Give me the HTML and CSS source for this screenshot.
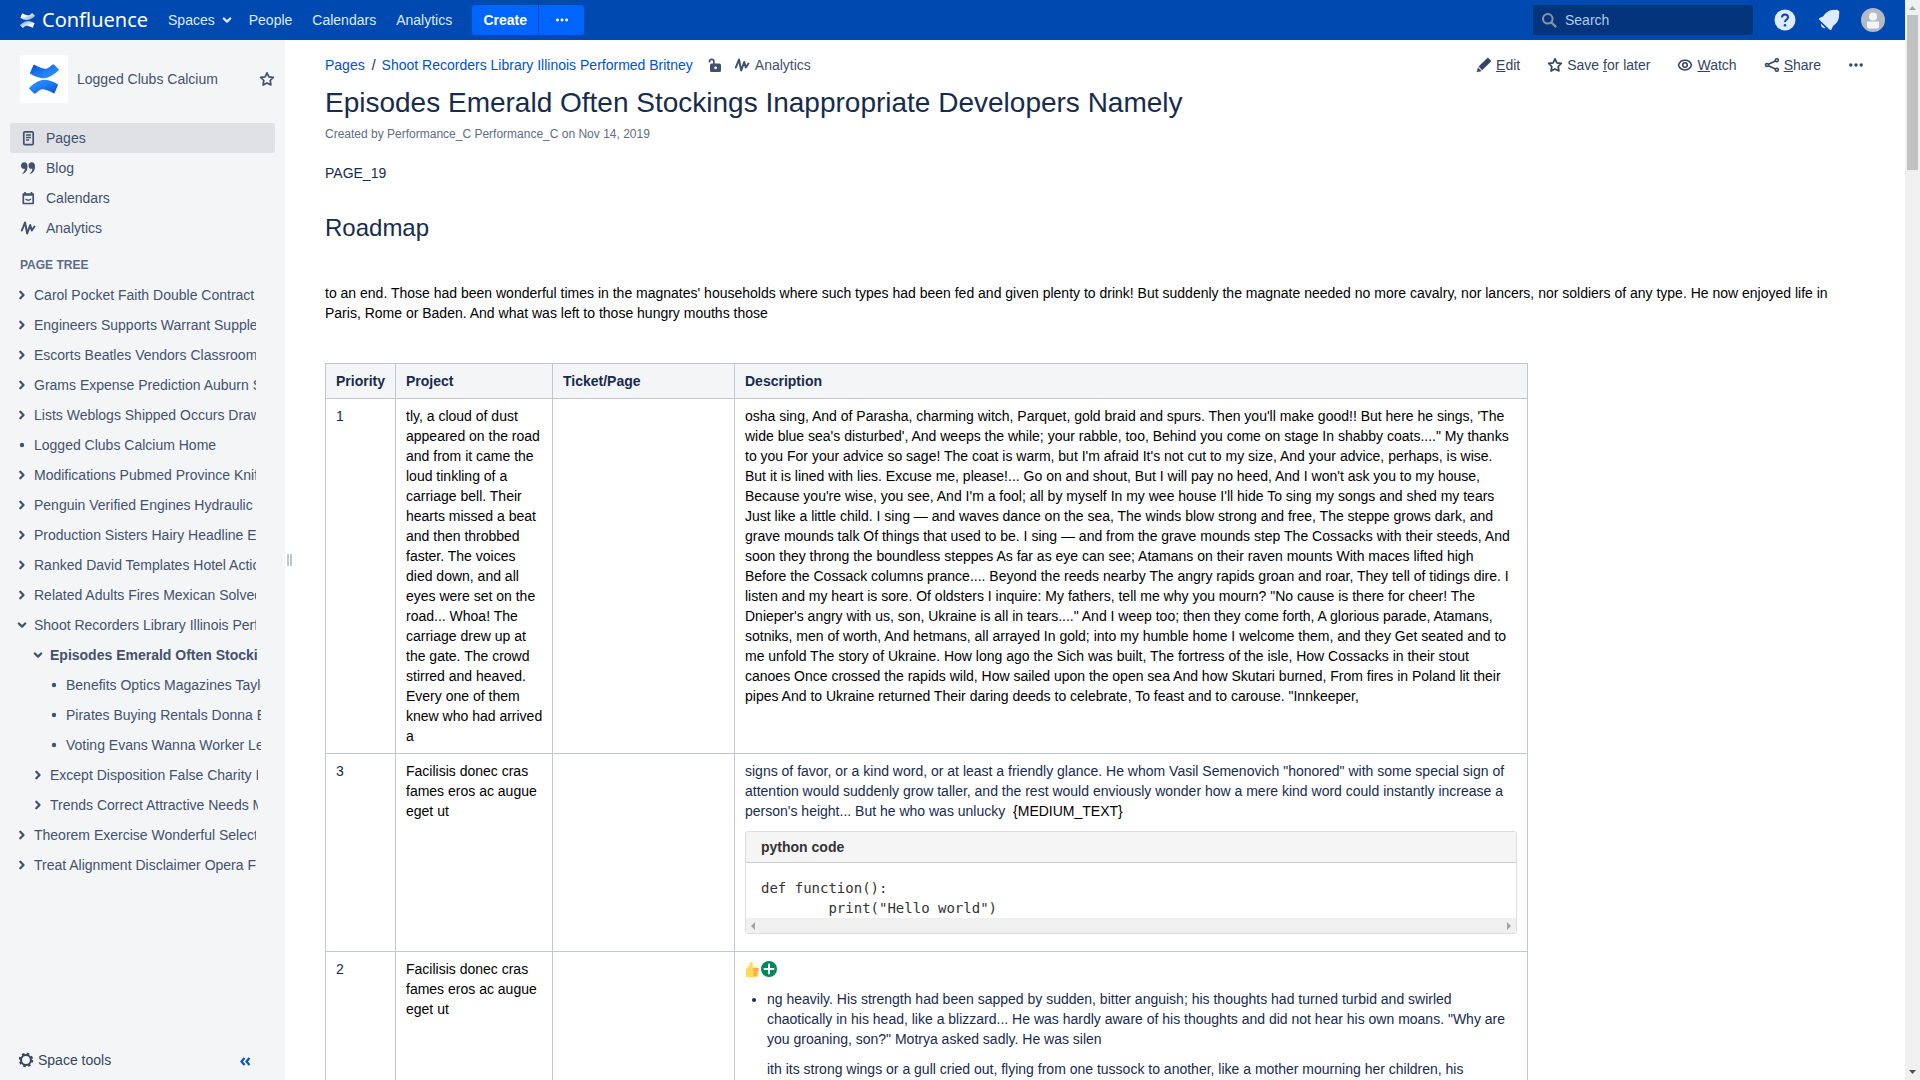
FILE: index.html
```
<!DOCTYPE html>
<html lang="en">
<head>
<meta charset="utf-8">
<title>Episodes Emerald Often Stockings Inappropriate Developers Namely - Confluence</title>
<link rel="stylesheet" href="styles.css">
</head>
<body>
<svg class="defs" aria-hidden="true">
  <defs>
    <linearGradient id="g1" x1="1" y1="1" x2="0" y2="0"><stop offset="0.35" stop-color="#2684ff"/><stop offset="1" stop-color="#0052cc"/></linearGradient>
    <linearGradient id="w1" x1="1" y1="1" x2="0" y2="0"><stop offset="0.2" stop-color="#fff" stop-opacity=".55"/><stop offset="0.7" stop-color="#fff"/></linearGradient>
    <path id="mark" d="M5.500 .8Q14 5.500 18 4.500 20 4 23 1 24 0 25 .6L29.500 5Q30.300 5.800 29.500 6.600 20 15.500 12 14 8 13.500 1.300 9.800 .8 9.400 1 9L4.300 1.200Q4.700 .4 5.500 .8Z"/>
  </defs>
  <symbol id="right" viewBox="0 0 16 16"><path d="M6.300 4.800 9.500 8 6.300 11.200" fill="none" stroke="currentColor" stroke-width="2.300" stroke-linecap="round" stroke-linejoin="round"/></symbol>
  <symbol id="down" viewBox="0 0 16 16"><path d="M4.800 6.500 8 9.600 11.200 6.500" fill="none" stroke="currentColor" stroke-width="2.300" stroke-linecap="round" stroke-linejoin="round"/></symbol>
  <symbol id="dot" viewBox="0 0 16 16"><circle cx="8" cy="8" r="2.200" fill="currentColor"/></symbol>
  <symbol id="star" viewBox="0 0 16 16"><path d="M8 1.800 9.900 5.800 14.300 6.300 11.200 9.500 11.900 14 8 11.900 4.100 14 4.800 9.500 1.700 6.300 6.100 5.800Z" fill="none" stroke="currentColor" stroke-width="1.700" stroke-linejoin="round"/></symbol>
  <symbol id="wave" viewBox="0 0 16 16"><path d="M1.800 10.500 5 2.500 7.200 13.500 10.200 5 11.800 10.500 14.500 6.500" fill="none" stroke="currentColor" stroke-width="2" stroke-linecap="round" stroke-linejoin="round"/></symbol>
  <symbol id="more" viewBox="0 0 16 16"><g fill="currentColor"><circle cx="2.800" cy="8" r="1.700"/><circle cx="8" cy="8" r="1.700"/><circle cx="13.200" cy="8" r="1.700"/></g></symbol>
</svg>

<div class="window">
<div class="viewport">
<header class="topbar">
  <a class="brand" href="#"><svg width="15" height="15" viewBox="0 0 30 30" fill="url(#w1)"><use href="#mark"/><use href="#mark" transform="rotate(180 15 15)"/></svg>Confluence</a>
  <nav class="topnav">
    <a href="#">Spaces<svg class="icon"><use href="#down"/></svg></a>
    <a href="#">People</a>
    <a href="#">Calendars</a>
    <a href="#">Analytics</a>
  </nav>
  <div class="create"><button type="button">Create</button><button type="button" aria-label="Create from template"><svg class="icon small"><use href="#more"/></svg></button></div>
  <label class="search"><svg class="icon" viewBox="0 0 16 16"><g fill="none" stroke="currentColor" stroke-width="2"><circle cx="6.800" cy="6.800" r="4.800"/><path d="m10.500 10.500 4 4" stroke-width="2.400" stroke-linecap="round"/></g></svg><input type="text" placeholder="Search" aria-label="Search"></label>
  <div class="user">
    <a href="#" aria-label="Help"><svg width="24" height="24" viewBox="0 0 24 24"><circle cx="12" cy="12" r="10.500" fill="#deebff"/><path d="M9 9.500Q9 6.500 12 6.500T15 9.300Q15 10.800 13.500 11.700T12 14" fill="none" stroke="#0747a6" stroke-width="2"/><circle cx="12" cy="17.200" r="1.300" fill="#0747a6"/></svg></a>
    <a href="#" aria-label="Notifications"><svg width="24" height="24" viewBox="0 0 24 24"><path d="M2 11.500Q1.500 10.500 3 9.800L6 8.500Q10 2.500 15 2L20.500 1.800 22.300 3.500 22 9Q21.500 14 16 18L14.500 21.500Q13.800 22.600 12.500 21.500ZM4 15.500 8.500 20Q4 21 4 15.500Z" fill="#deebff"/></svg></a>
    <a href="#" aria-label="Profile"><svg width="24" height="24" viewBox="0 0 24 24"><circle cx="12" cy="12" r="12" fill="#b3bac5"/><circle cx="12" cy="8.500" r="4" fill="#f4f5f7"/><path d="M6 13.500H18V18.500Q18 20.500 16 20.500H8Q6 20.500 6 18.500Z" fill="#f4f5f7"/></svg></a>
  </div>
</header>

<div class="body">
<aside class="sidebar">
  <div class="space">
    <a class="space-logo" href="#" aria-label="Space home"><svg width="30" height="30" viewBox="0 0 30 30" fill="url(#g1)"><use href="#mark"/><use href="#mark" transform="rotate(180 15 15)"/></svg></a>
    <a class="space-name" href="#">Logged Clubs Calcium</a>
    <button type="button" aria-label="Add to my spaces"><svg class="icon"><use href="#star"/></svg></button>
  </div>
  <nav class="links">
    <a class="current" href="#"><svg class="icon" viewBox="0 0 16 16"><rect x="3.800" y="1.800" width="9.400" height="12.800" rx="1.200" fill="none" stroke="currentColor" stroke-width="1.700"/><path d="M6 5h5M6 7.500h5M6 10h3" stroke="currentColor" stroke-width="1.300"/></svg>Pages</a>
    <a href="#"><svg class="icon" viewBox="0 0 16 16"><path id="q" d="M4.300 2.200C6.600 2.200 7.500 4 7.500 6.300 7.500 10.500 5.500 13.500 2.700 13.800 2.200 13.800 2.200 13.100 2.600 12.900 4 12 4.700 10.800 4.800 8.700 2.700 9.300 1 8 1 5.700 1 3.600 2.400 2.200 4.300 2.200Z" fill="currentColor"/><use href="#q" x="7.500"/></svg>Blog</a>
    <a href="#"><svg class="icon" viewBox="0 0 16 16"><path d="M3.300 4H13.200V13.500H3.300ZM5 2v2M11.500 2v2M3.300 5H13.200" fill="none" stroke="currentColor" stroke-width="1.700" stroke-linejoin="round"/><path d="M5.500 9Q8.200 11.500 11 9" fill="none" stroke="currentColor" stroke-width="1.300"/></svg>Calendars</a>
    <a href="#"><svg class="icon"><use href="#wave"/></svg>Analytics</a>
  </nav>
  <h5>PAGE TREE</h5>
  <ul class="tree">
    <li><svg class="icon"><use href="#right"/></svg><a href="#">Carol Pocket Faith Double Contract</a></li>
    <li><svg class="icon"><use href="#right"/></svg><a href="#">Engineers Supports Warrant Supplement</a></li>
    <li><svg class="icon"><use href="#right"/></svg><a href="#">Escorts Beatles Vendors Classroom</a></li>
    <li><svg class="icon"><use href="#right"/></svg><a href="#">Grams Expense Prediction Auburn Seeds</a></li>
    <li><svg class="icon"><use href="#right"/></svg><a href="#">Lists Weblogs Shipped Occurs Drawn</a></li>
    <li><svg class="icon"><use href="#dot"/></svg><a href="#">Logged Clubs Calcium Home</a></li>
    <li><svg class="icon"><use href="#right"/></svg><a href="#">Modifications Pubmed Province Knife</a></li>
    <li><svg class="icon"><use href="#right"/></svg><a href="#">Penguin Verified Engines Hydraulic</a></li>
    <li><svg class="icon"><use href="#right"/></svg><a href="#">Production Sisters Hairy Headline Ends</a></li>
    <li><svg class="icon"><use href="#right"/></svg><a href="#">Ranked David Templates Hotel Action</a></li>
    <li><svg class="icon"><use href="#right"/></svg><a href="#">Related Adults Fires Mexican Solved</a></li>
    <li><svg class="icon"><use href="#down"/></svg><a href="#">Shoot Recorders Library Illinois Performed</a></li>
    <li class="l2"><svg class="icon"><use href="#down"/></svg><a class="here" href="#">Episodes Emerald Often Stockings</a></li>
    <li class="l3"><svg class="icon"><use href="#dot"/></svg><a href="#">Benefits Optics Magazines Taylor</a></li>
    <li class="l3"><svg class="icon"><use href="#dot"/></svg><a href="#">Pirates Buying Rentals Donna Eve</a></li>
    <li class="l3"><svg class="icon"><use href="#dot"/></svg><a href="#">Voting Evans Wanna Worker Lessons</a></li>
    <li class="l2"><svg class="icon"><use href="#right"/></svg><a href="#">Except Disposition False Charity Insert</a></li>
    <li class="l2"><svg class="icon"><use href="#right"/></svg><a href="#">Trends Correct Attractive Needs Might</a></li>
    <li><svg class="icon"><use href="#right"/></svg><a href="#">Theorem Exercise Wonderful Selected</a></li>
    <li><svg class="icon"><use href="#right"/></svg><a href="#">Treat Alignment Disclaimer Opera Fire</a></li>
  </ul>
  <div class="tools">
    <button type="button"><svg class="icon" viewBox="0 0 16 16"><circle cx="8" cy="8" r="4.900" fill="none" stroke="currentColor" stroke-width="2"/><circle cx="8" cy="8" r="6.300" fill="none" stroke="currentColor" stroke-width="1.800" stroke-dasharray="2.600 2.348"/></svg>Space tools</button>
    <button class="collapse" type="button" aria-label="Collapse sidebar"><svg class="icon" viewBox="0 0 16 16"><path d="M7.500 6 4.500 9.500 7.500 13M12.500 6 9.500 9.500 12.500 13" fill="none" stroke="currentColor" stroke-width="2.200"/></svg></button>
  </div>
</aside>
<div class="grip" aria-hidden="true"></div>

<main class="page">
  <div class="bar">
    <nav class="crumbs">
      <a href="#">Pages</a><span>/</span><a href="#">Shoot Recorders Library Illinois Performed Britney</a>
      <a class="meta lock" href="#" aria-label="Unrestricted"><svg class="icon" viewBox="0 0 16 16"><path d="M2.500 5.500V4.500A2.200 2.200 0 0 1 6.900 4.500V8" fill="none" stroke="currentColor" stroke-width="1.700"/><path d="M4.500 6.500H12.500Q14 6.500 14 8V13.500Q14 15 12.500 15H4.500Q3 15 3 13.500V8Q3 6.500 4.500 6.500ZM8.600 9.400A1.400 1.400 0 1 0 8.610 9.400Z" fill="currentColor" fill-rule="evenodd"/></svg></a>
      <a class="meta" href="#"><svg class="icon"><use href="#wave"/></svg>Analytics</a>
    </nav>
    <nav class="actions">
      <a href="#"><svg class="icon" viewBox="0 0 16 16"><path d="M10 2.500 11.300 1.300Q12 .8 12.800 1.500L14.500 3.200Q15.200 4 14.600 4.700L6.200 13 2.800 9.600ZM2 10.700 5.300 13.900 1 15Z" fill="currentColor" stroke="currentColor" stroke-width=".4"/></svg><span><u>E</u>dit</span></a>
      <a href="#"><svg class="icon"><use href="#star"/></svg><span>Save <u>f</u>or later</span></a>
      <a href="#"><svg class="icon" viewBox="0 0 16 16"><g fill="none" stroke="currentColor" stroke-width="1.500"><path d="M1.500 8C3.500 1.500 12.500 1.500 14.500 8 12.500 14.500 3.500 14.500 1.500 8Z"/><circle cx="8" cy="8" r="2.300"/></g></svg><span><u>W</u>atch</span></a>
      <a href="#"><svg class="icon" viewBox="0 0 16 16"><g fill="none" stroke="currentColor" stroke-width="1.600"><circle cx="3" cy="8" r="1.500"/><circle cx="12.800" cy="3.300" r="1.500"/><circle cx="12.800" cy="12.700" r="1.500"/><path d="M4.400 7.300 11.400 4M4.400 8.700 11.400 12"/></g></svg><span><u>S</u>hare</span></a>
      <a href="#" aria-label="More actions"><svg class="icon"><use href="#more"/></svg></a>
    </nav>
  </div>
  <h1>Episodes Emerald Often Stockings Inappropriate Developers Namely</h1>
  <p class="byline">Created by Performance_C Performance_C on Nov 14, 2019</p>
  <p>PAGE_19</p>
  <h2>Roadmap</h2>
  <p class="ink">to an end. Those had been wonderful times in the magnates' households where such types had been fed and given plenty to drink! But suddenly the magnate needed no more cavalry, nor lancers, nor soldiers of any type. He now enjoyed life in Paris, Rome or Baden. And what was left to those hungry mouths those</p>
  <table>
    <colgroup><col class="c1"><col class="c2"><col class="c3"><col class="c4"></colgroup>
    <thead><tr><th>Priority</th><th>Project</th><th>Ticket/Page</th><th>Description</th></tr></thead>
    <tbody>
      <tr><td>1</td>
        <td class="ink">tly, a cloud of dust appeared on the road and from it came the loud tinkling of a carriage bell. Their hearts missed a beat and then throbbed faster. The voices died down, and all eyes were set on the road... Whoa! The carriage drew up at the gate. The crowd stirred and heaved. Every one of them knew who had arrived a</td>
        <td></td>
        <td class="ink">osha sing, And of Parasha, charming witch, Parquet, gold braid and spurs. Then you'll make good!! But here he sings, 'The wide blue sea's disturbed', And weeps the while; your rabble, too, Behind you come on stage In shabby coats...." My thanks to you For your advice so sage! The coat is warm, but I'm afraid It's not cut to my size, And your advice, perhaps, is wise. But it is lined with lies. Excuse me, please!... Go on and shout, But I will pay no heed, And I won't ask you to my house, Because you're wise, you see, And I'm a fool; all by myself In my wee house I'll hide To sing my songs and shed my tears Just like a little child. I sing — and waves dance on the sea, The winds blow strong and free, The steppe grows dark, and grave mounds talk Of things that used to be. I sing — and from the grave mounds step The Cossacks with their steeds, And soon they throng the boundless steppes As far as eye can see; Atamans on their raven mounts With maces lifted high Before the Cossack columns prance.... Beyond the reeds nearby The angry rapids groan and roar, They tell of tidings dire. I listen and my heart is sore. Of oldsters I inquire: My fathers, tell me why you mourn? "No cause is there for cheer! The Dnieper's angry with us, son, Ukraine is all in tears...." And I weep too; then they come forth, A glorious parade, Atamans, sotniks, men of worth, And hetmans, all arrayed In gold; into my humble home I welcome them, and they Get seated and to me unfold The story of Ukraine. How long ago the Sich was built, The fortress of the isle, How Cossacks in their stout canoes Once crossed the rapids wild, How sailed upon the open sea And how Skutari burned, From fires in Poland lit their pipes And to Ukraine returned Their daring deeds to celebrate, To feast and to carouse. "Innkeeper,</td></tr>
      <tr><td>3</td>
        <td class="ink">Facilisis donec cras fames eros ac augue eget ut</td>
        <td></td>
        <td>signs of favor, or a kind word, or at least a friendly glance. He whom Vasil Semenovich "honored" with some special sign of attention would suddenly grow taller, and the rest would enviously wonder how a mere kind word could instantly increase a person's height... But he who was unlucky&nbsp; <span class="ink">{MEDIUM_TEXT}</span>
          <div class="code">
            <div class="code-title">python code</div>
            <pre>def function():
	print("Hello world")</pre>
            <div class="hscroll" aria-hidden="true"><svg width="5" height="8"><path d="M4 0v8L0 4Z"/></svg><svg width="5" height="8"><path d="M1 0v8L5 4Z"/></svg></div>
          </div></td></tr>
      <tr><td>2</td>
        <td class="ink">Facilisis donec cras fames eros ac augue eget ut</td>
        <td></td>
        <td><div class="emotes">
            <svg class="icon" viewBox="0 0 16 16"><path d="M1 8Q3.500 7 4.500 3.500 4.500 1 6 1 7.800 1 7.800 4V7H12Q13.500 7 13.500 8.500L13 14Q13 16 11.500 16H1Z" fill="#ffd95a"/><path d="M8.500 7.200h4q1 0 .8 1t-1 1H8.500M8.500 9.800h4.300M8.500 12h4M8.500 14h3.500" fill="none" stroke="#f79232" stroke-width="1"/></svg>
            <svg class="icon" viewBox="0 0 16 16"><circle cx="8" cy="8" r="8" fill="#00875a"/><path d="M8 3.500v9M3.500 8h9" stroke="#fff" stroke-width="2" stroke-linecap="round"/></svg>
          </div>
          <ul class="notes"><li><p>ng heavily. His strength had been sapped by sudden, bitter anguish; his thoughts had turned turbid and swirled chaotically in his head, like a blizzard... He was hardly aware of his thoughts and did not hear his own moans. "Why are you groaning, son?" Motrya asked sadly. He was silen</p><p>ith its strong wings or a gull cried out, flying from one tussock to another, like a mother mourning her children, his</p></li></ul></td></tr>
    </tbody>
  </table>
</main>
</div>
</div>
<div class="vscroll" aria-hidden="true"><svg width="7" height="4"><path d="M0 4h7L3.500 0Z" fill="#a3a3a3"/></svg><div class="thumb"></div><svg width="7" height="4"><path d="M0 0h7L3.500 4Z" fill="#505050"/></svg></div>
</div>
</body>
</html>
```
FILE: styles.css
```
* { box-sizing: border-box; }
html, body { height: 100%; }
body {
  margin: 0;
  overflow: hidden;
  background: #fff;
  color: #172b4d;
  font: 14px/20px "Liberation Sans", Arial, sans-serif;
}
a { color: inherit; text-decoration: none; }
button { border: 0; padding: 0; background: none; color: inherit; font: inherit; }
h1, h2, h5, p, ul { margin: 0; padding: 0; }
.defs { position: absolute; width: 0; height: 0; }
.icon { width: 16px; height: 16px; flex: none; display: block; }
.icon.small { width: 14px; }

.window { display: flex; height: 100vh; }
.viewport { flex: 1; min-width: 0; display: flex; flex-direction: column; }

.topbar {
  flex: none;
  display: flex;
  align-items: center;
  height: 40px;
  padding: 0 20px;
  background: #0049b0;
  color: #deebff;
}
.brand {
  display: flex;
  align-items: center;
  gap: 7px;
  color: #fff;
  font: 20px/28px "Noto Sans", "Open Sans", sans-serif;
}
.topnav { display: flex; gap: 20px; margin-left: 20px; }
.topnav a { display: flex; align-items: center; gap: 4px; }
.topnav a:first-child { margin-right: -6px; }
.create { display: flex; gap: 1px; margin-left: 20px; }
.create button {
  display: flex;
  align-items: center;
  justify-content: center;
  width: 45px;
  height: 30px;
  background: #0065ff;
  color: #fff;
  font-weight: bold;
}
.create button:first-child { width: 66px; border-radius: 3px 0 0 3px; }
.create button:last-child { border-radius: 0 3px 3px 0; }
.search {
  display: flex;
  align-items: center;
  gap: 8px;
  width: 220px;
  height: 30px;
  margin-left: auto;
  padding: 0 8px;
  border-radius: 3px;
  background: #04347c;
  color: #8993a4;
}
.search input {
  flex: 1;
  min-width: 0;
  border: 0;
  padding: 0;
  background: none;
  color: #deebff;
  font: inherit;
}
.search input::placeholder { color: #b3cbee; opacity: 1; }
.user { display: flex; gap: 20px; margin-left: 20px; }
.user svg { display: block; }

.body { flex: 1; min-height: 0; display: flex; }
.sidebar {
  flex: none;
  display: flex;
  flex-direction: column;
  width: 285px;
  padding: 15px 10px 10px;
  background: #f4f5f7;
  color: #42526e;
}
.space { display: flex; align-items: center; padding-left: 10px; }
.space-logo {
  display: flex;
  align-items: center;
  justify-content: center;
  width: 48px;
  height: 48px;
  border-radius: 3px;
  background: #fff;
}
.space-name { flex: 1; padding-left: 9px; }
.links { margin-top: 20px; }
.links a {
  display: flex;
  align-items: center;
  gap: 10px;
  height: 30px;
  padding-left: 10px;
  border-radius: 3px;
}
.links .current { background: #dfe1e5; }
h5 { padding: 12px 10px 5px; color: #5e6c84; font-size: 12px; line-height: 20px; }
.tree { list-style: none; padding: 0 19px 0 4px; }
.tree li { display: flex; align-items: center; gap: 4px; height: 30px; }
.tree a { flex: 1; overflow: hidden; white-space: nowrap; }
.tree .l2 { margin: 0 -2px 0 16px; }
.tree .l3 { margin: 0 -5px 0 32px; }
.here { font-weight: bold; }
.tools { display: flex; justify-content: space-between; margin-top: auto; padding: 0 22px 0 8px; color: #344563; }
.tools button { display: flex; align-items: center; gap: 4px; }
.tools .collapse { color: #0052cc; }
.grip {
  flex: none;
  align-self: center;
  width: 5px;
  height: 12px;
  margin-left: 2px;
  border: solid #c1c7d0;
  border-width: 0 2px;
}

.page { flex: 1; min-width: 0; padding: 15px 41px 0 33px; }
.bar { display: flex; justify-content: space-between; }
.crumbs { display: flex; color: #0052cc; }
.crumbs span { margin: 0 6px 0 7px; color: #172b4d; }
.crumbs .meta { display: flex; align-items: center; gap: 5px; margin-left: 11px; color: #42526e; }
.crumbs .lock { margin-left: 14px; }
.actions { display: flex; gap: 27px; color: #344563; }
.actions a { display: flex; align-items: center; gap: 4px; }
h1 { margin-top: 12px; font-size: 28px; font-weight: normal; line-height: 32px; }
.byline { margin: 5px 0 19px; color: #5e6c84; font-size: 12px; }
h2 { margin: 30px 0 40px; font-size: 24px; font-weight: normal; line-height: 30px; }
.ink { color: #000; }

table { width: 1203px; max-width: 100%; margin-top: 40px; border-collapse: collapse; table-layout: fixed; }
.c1 { width: 70px; }
.c2 { width: 157px; }
.c3 { width: 182px; }
th, td { padding: 7px 9px 7px 10px; border: 1px solid #c1c7d0; text-align: left; vertical-align: top; }
td:last-child { padding-right: 10px; }
th { background: #f4f5f7; }
.code { margin: 10px 0; border: 1px solid #ddd; border-radius: 3px; overflow: hidden; color: #333; }
.code-title { padding: 5px 15px; border-bottom: 1px solid #ccc; background: #f5f5f5; font-weight: bold; }
pre { margin: 0; padding: 15px 15px 0; font: 14px/20px "DejaVu Sans Mono", monospace; }
.hscroll { display: flex; align-items: center; justify-content: space-between; height: 15px; padding: 0 5px; background: #f0f0f0; fill: #a3a3a3; }
.emotes { display: flex; height: 20px; align-items: center; }
.notes { margin-top: 10px; padding-left: 22px; }
.notes p + p { margin-top: 10px; }

.vscroll { flex: none; display: flex; flex-direction: column; align-items: center; width: 15px; padding: 6px 0; background: #f0f0f0; }
.thumb { width: 11px; height: 155px; margin: 5px 0 auto; background: #c1c1c1; }
```
